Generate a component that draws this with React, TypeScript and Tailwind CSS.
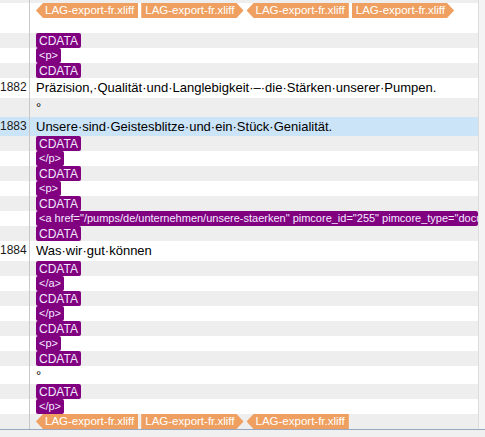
import React from 'react'

type Row =
  | { kind: 'tags'; h: number; pt: number; bg: string; tags: ('open' | 'close')[] }
  | { kind: 'ph'; bg: string; label: string; small?: boolean; full?: boolean }
  | { kind: 'text'; bg: string; h: number; num?: string; text: string }

const G = 'bg-[#eeeeee]'
const W = 'bg-white'
const B = 'bg-[#cce4f7]'

const rows: Row[] = [
  { kind: 'tags', h: 30, pt: 0, bg: W, tags: ['open', 'close', 'open', 'close'] },
  { kind: 'ph', bg: G, label: 'CDATA' },
  { kind: 'ph', bg: W, label: '<p>', small: true },
  { kind: 'ph', bg: G, label: 'CDATA' },
  { kind: 'text', bg: W, h: 20, num: '1882', text: 'Präzision,·Qualität·und·Langlebigkeit·–·die·Stärken·unserer·Pumpen.' },
  { kind: 'text', bg: G, h: 19, text: '°' },
  { kind: 'text', bg: B, h: 19, num: '1883', text: 'Unsere·sind·Geistesblitze·und·ein·Stück·Genialität.' },
  { kind: 'ph', bg: G, label: 'CDATA' },
  { kind: 'ph', bg: W, label: '</p>', small: true },
  { kind: 'ph', bg: G, label: 'CDATA' },
  { kind: 'ph', bg: W, label: '<p>', small: true },
  { kind: 'ph', bg: G, label: 'CDATA' },
  {
    kind: 'ph',
    bg: W,
    small: true,
    full: true,
    label: '<a href="/pumps/de/unternehmen/unsere-staerken" pimcore_id="255" pimcore_type="document">',
  },
  { kind: 'ph', bg: G, label: 'CDATA' },
  { kind: 'text', bg: W, h: 20, num: '1884', text: 'Was·wir·gut·können' },
  { kind: 'ph', bg: G, label: 'CDATA' },
  { kind: 'ph', bg: W, label: '</a>', small: true },
  { kind: 'ph', bg: G, label: 'CDATA' },
  { kind: 'ph', bg: W, label: '</p>', small: true },
  { kind: 'ph', bg: G, label: 'CDATA' },
  { kind: 'ph', bg: W, label: '<p>', small: true },
  { kind: 'ph', bg: G, label: 'CDATA' },
  { kind: 'text', bg: W, h: 18, text: '°' },
  { kind: 'ph', bg: G, label: 'CDATA' },
  { kind: 'ph', bg: W, label: '</p>', small: true },
  { kind: 'tags', h: 15, pt: 0, bg: G, tags: ['open', 'close', 'open'] },
]

function FileTag({ type }: { type: 'open' | 'close' }) {
  return (
    <span
      className={
        'inline-flex h-[15px] items-center bg-[#ef9f5f] text-[11.5px] leading-none text-white ' +
        (type === 'open'
          ? 'pl-[9px] pr-[4px] [clip-path:polygon(7px_0,100%_0,100%_100%,7px_100%,0_50%)]'
          : 'pl-[4px] pr-[9px] [clip-path:polygon(0_0,calc(100%-7px)_0,100%_50%,calc(100%-7px)_100%,0_100%)]')
      }
    >
      LAG-export-fr.xliff
    </span>
  )
}

export default function App() {
  return (
    <div className="flex h-[437px] w-[485px] flex-col overflow-hidden bg-white font-['Liberation_Sans',Arial,sans-serif]">
      <div className={'flex h-[3px] shrink-0 ' + G}>
        <div className="w-[30px] border-r border-[#c8c8c8]" />
        <div className="flex-1" />
        <div className="w-[7px] border-l border-[#dcdcdc] bg-[#f4f4f4]" />
      </div>
      {rows.map((r, i) => (
        <div
          key={i}
          className={'flex shrink-0 overflow-hidden ' + r.bg}
          style={{ height: r.kind === 'ph' ? 15 : r.h }}
        >
          <div className="w-[30px] shrink-0 border-r border-[#c8c8c8] pr-[4px] text-right text-[12px] leading-[19px] text-[#1a1a1a]">
            {r.kind === 'text' ? r.num : null}
          </div>
          <div className="min-w-0 flex-1 overflow-hidden pl-[6px]">
            {r.kind === 'tags' && (
              <div className="flex gap-[3px]">
                {r.tags.map((t, j) => (
                  <FileTag key={j} type={t} />
                ))}
              </div>
            )}
            {r.kind === 'ph' && (
              <div className="flex h-[15px] items-center">
                <span
                  className={
                    'inline-flex h-[15px] items-center whitespace-nowrap rounded-[2px] bg-[#800080] px-[3px] leading-none text-[#f3e9ff] ' +
                    (r.small ? 'text-[11px] ' : 'text-[12px] ') +
                    (r.full ? 'w-full' : '')
                  }
                >
                  {r.label}
                </span>
              </div>
            )}
            {r.kind === 'text' && (
              <div className="whitespace-nowrap text-[13px] leading-[19px] text-black">{r.text}</div>
            )}
          </div>
          <div className="w-[7px] shrink-0 border-l border-[#dcdcdc] bg-[#f4f4f4]" />
        </div>
      ))}
      <div className="flex-1 border-t border-[#9aa8bf] bg-[#f0f0f0]" />
    </div>
  )
}
